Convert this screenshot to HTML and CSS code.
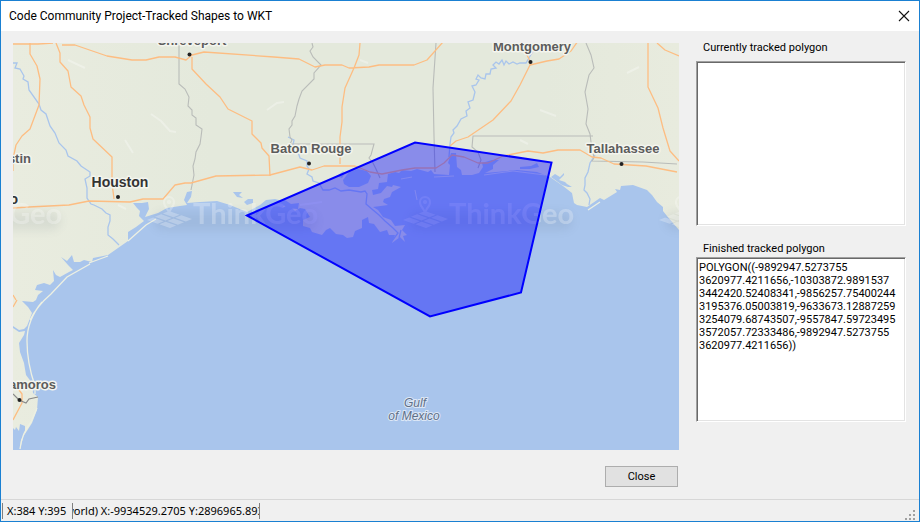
FILE: index.html
```html
<!DOCTYPE html>
<html lang="en">
<head>
<meta charset="utf-8">
<title>Code Community Project-Tracked Shapes to WKT</title>
<link rel="stylesheet" href="styles.css">
</head>
<body>
<div class="window">
  <header class="titlebar">
    <h1 class="title">Code Community Project-Tracked Shapes to WKT</h1>
    <button class="dismiss" type="button" aria-label="Close window">
      <svg width="12" height="12" viewBox="0 0 12 12"><path d="M1 1 11 11M11 1 1 11" fill="none" stroke="#111" stroke-width="1.1"/></svg>
    </button>
  </header>
  <main class="content">
    <section class="map-column">
      <svg class="map" viewBox="13 43 666 407" preserveAspectRatio="xMidYMid slice" role="img" aria-label="Map of the Gulf coast">
        <defs>
          <linearGradient id="ground" x1="0" x2="1" y1="0" y2="0">
            <stop offset="0" stop-color="#e9ecdf"/><stop offset=".3" stop-color="#e4e9dc"/><stop offset=".8" stop-color="#e4e9dc"/><stop offset="1" stop-color="#e8ebde"/>
          </linearGradient>
          <filter id="soft" x="-20%" y="-100%" width="140%" height="300%"><feGaussianBlur stdDeviation="5"/></filter>
          <g id="mark">
            <rect x="-16" y="4" width="164" height="18" rx="9" fill="#456" opacity=".1" filter="url(#soft)"/>
            <g fill="#fff" opacity=".26">
              <path transform="matrix(23 8 -22 9 0 3)" d="M0 0h.46v.28H0zM.54 0H1v.28H.54zM0 .36h.46v.28H0zM.54 .36H1v.28H.54zM0 .72h.46V1H0zM.54 .72H1V1H.54z"/>
              <path d="M0 6C-4-1-6-2-6-6a6 6 0 0 1 12 0C6-2 4-1 0 6zM0-10a4 4 0 0 0-4 4c0 3 2 4 4 8 2-4 4-5 4-8a4 4 0 0 0-4-4z" fill-rule="evenodd"/>
              <circle cy="-6" r="2"/>
              <text class="mark-text" x="24" y="16">ThinkGeo</text>
            </g>
          </g>
        </defs>
        <rect x="-400" y="-400" width="1600" height="1200" fill="#a9c5ec"/>
        <path fill="url(#ground)" d="M13 43V428L15 430 16 427 19 431 20 424 25 426 25 433 21 440 20 450 23 437 32 423 37 410 38 397 33 393 32 383 26 375 24 363 20 352 19 343 24 335 25 331 19 332 13 328 13 326 19 330 24 329 27 326 32 313 28 307 22 301 33 302 36 300 38 295 43 291 35 290 37 285 44 283 50 285 54 281 53 270 56 275 60 277 69 272 73 270 68 265 61 257 67 261 72 255 74 262 80 262 84 260 92 262 93 258 108 255 118 248 128 241 128 232 136 227 144 221 139 216 140 211 137 208 133 203 142 203 148 202 149 209 145 217 158 213 167 208 180 206 187 205 184 200 187 192 192 191 191 197 187 203 200 202 217 201 230 205 247 212 260 205 266 200 275 199 287 202 283 207 290 206 295 211 300 208 305 209 310 217 303 220 303 226 310 228 312 232 322 235 326 230 330 228 336 234 343 235 347 238 353 237 355 231 362 228 362 220 368 217 369 223 374 224 380 232 387 230 389 235 395 235 392 243 400 237 405 242 403 236 407 235 402 230 405 225 395 226 391 220 383 217 378 210 373 207 388 205 383 202 384 199 390 197 392 192 401 187 393 185 392 187 387 186 381 193 373 195 372 190 378 189 379 183 387 182 388 174 395 172 399 173 402 170 411 171 417 169 428 172 431 170 434 174 449 175 450 165 448 163 451 153 456 153 457 167 461 170 462 175 472 175 479 173 483 167 482 163 492 160 499 160 493 165 493 169 485 173 517 170 537 172 550 177 563 186 572 193 574 203 577 205 587 207 600 198 604 200 617 192 615 189 620 190 621 186 633 185 647 190 652 195 657 202 663 207 663 211 667 216 679 230V43z"/>
        <g fill="#a9c5ec">
          <path d="M343 180l6-8 9-3 9 2 4 5-3 7-9 4-10 0-5-3zM337 176l6-5 2 2-3 5zM233 192h9l-3 3 4 3-6-1zM244 202l4-3 5 0 0 4-6 2zM277 200l8 0 6 4 8-1-1 6-11-1zM520 167l11-1 6-3 2 4-9 2-10 0zM551 177l4-3 5 3 4-4 0 2-5 5 6 2 2 2 5 3-4 0-6-2z"/>
        </g>
        <g fill="none" stroke="#edf0e2" stroke-width="1.3">
          <path d="M30 320Q37 306 51 294L67 277 90 264M89 263l19-7M128 241l18-16 10-6M42 302Q27 320 27 341q0 22 8 45v8M20 449q2-16 11-27l6-14M588 210l12-8"/>
        </g>
        <g fill="none" stroke="#edf0e2" opacity=".7"><path d="M484 175l29-4 32 4M401 179l11-2M415 190l2 10M434 177l20-1"/></g>
        <g fill="none" stroke="#fff" opacity=".3" stroke-width="2"><path d="M151 114l10 7 9 10 6 1M125 140l8 13M118 205l8 4M68 60l17 8M267 110l10-7 7-1M540 110l16 6M627 73l12-6M300 205l22-3M520 140l8 4M360 60l8 3"/></g>
        <g class="river">
          <path d="M13 63h4l-2 5 5 1 4 7-1 3 5 3 1 8 10 14 2 6 5 4 4 12 5 7 4 10 7 7 2 6 9 5 4 5 9 6 0 4-5 3 2 9 0 10 4 6 3 1 8 4 4 4 4 2 0 6-2 6 0 8 5 4 6 6"/>
          <path d="M534 50l-4 6-4 7-6 0-3 1-4-2-4 2-3-3-2 4-2-5-3 4-3-2-3 3 3 3-5 1-1 5-4 0-1 5-4-1-3-3-2 4 3 1-3 5-4 1 3 6-2 8-5 2 2 6-4 3 1 5-6 3-4 7-4 4 1 3-3 4-1 7-1 13"/>
          <path d="M288 137l6 3-1 5 4 4 3 9 7 3 0 5 2 3-2 5 5 3 1 4 6 2 4 7 6 0 6-2 6 3 8-1 12 2 4-1 2 3-1 10 7 6 6 5 6 6 8 7 5 5-6 8M401 230l-2 8M595 155l-5 8-2 9-3 6 0 7-1 5 3 3 3 6-1 6"/>
        </g>
        <g class="border">
          <path d="M179 43v41l6 5 4 8-1 9 4 4 0 5 4 3 0 7 6 4-1 8-1 7-4 8-1 7-2 7 1 9-3 15M312 43l1 4-3 4 3 6 8 8-7 8 0 6-12 12-3 8-2 7-2 10-3 5 0 4-3 4 1 8 2 3-2 4h84l-3 11-2 3 4 5 3 6 4 9M436 43l-3 45 1 48 1 36M593 136H473l-1 11 6 5 3 8-3 8M586 43l5 12 3 13-5 7-4 17 3 17-2 15 4 10 1 8 3 16-2 3 51 1 34 2"/>
        </g>
        <g class="road">
          <path d="M13 44h25l15-1M30 43v11l7 12 3 13-1 26-9 24-8 7-6 9-3 14v12M56 43l4 10v9l8 9 3 16 10 9 3 9 6 12v11l3 11 19 18v26l2 16M62 45l13 0 32 11 25 4h14l13-3h16l11 3 6-5 12-3 70 5 25 2 16 8 10-2 17 0 7 3 20-1 10-2h35l13-5 16-18M192 57v12l14 15 14 13 8 12 24 12v13l9 9 1 5 7 8 1 20M360 43l-1 12-5 13M354 68l-9 20-3 19 0 15-2 15v27"/>
          <path d="M13 208l16-1 40-2 20-4 41 1 13-3h20l12-14 10-2h6l25-7 54-1 30-8 12 3 12-4h31l15 6 12 2 20-4 13-2h21l8-5 8-8 12 2 14 6 10 0 15-7 25-5 15 2 15-3h22l12 7 9 1 13 6 32 2 31 6M450 146l6-5 12-4 25-17 18-19 9-16 10-20 17-4 12-2 12-8 7-10M530 66v-5l-7-14M648 43v44l10 21 5 20 7 23 9 10M657 43l8 7 14 6M13 307l4-7M13 295l3 5M16 386l6 8v9l-9 17"/>
        </g>
        <path d="M13 394l6 6 7 3 3-4 9-2" fill="none" stroke="#888" stroke-width="1.2"/>
        <use href="#mark" x="-87" y="208"/><use href="#mark" x="169" y="208"/><use href="#mark" x="425" y="208"/><use href="#mark" x="681" y="208"/>
        <g fill="#222"><circle cx="189.500" cy="54.500" r="2"/><circle cx="118" cy="197" r="2"/><circle cx="309" cy="163.500" r="2"/><circle cx="530.500" cy="62" r="2"/><circle cx="621.500" cy="164" r="2"/><circle cx="19.500" cy="400" r="2"/></g>
        <g class="places">
          <text x="192" y="45">Shreveport</text>
          <text x="532" y="51">Montgomery</text>
          <text x="311" y="153">Baton Rouge</text>
          <text x="623" y="153">Tallahassee</text>
          <text class="major" x="120" y="187">Houston</text>
          <text class="ends" x="31" y="163">Austin</text>
          <text class="major ends" x="18" y="204">San Antonio</text>
          <text class="ends" x="56" y="389">Matamoros</text>
        </g>
        <g class="sea-name"><text x="415" y="407">Gulf</text><text x="414" y="420">of Mexico</text></g>
        <path d="M247 215.500 415 142.500 551.500 162.500 521 292.500 430 316.500z" fill="#00f" fill-opacity=".4" stroke="#00f" stroke-width="2"/>
      </svg>
      <button class="close" type="button">Close</button>
    </section>
    <section class="fields">
      <div class="field">
        <label for="current">Currently tracked polygon</label>
        <textarea id="current"></textarea>
      </div>
      <div class="field compact">
        <label for="finished">Finished tracked polygon</label>
        <textarea id="finished">POLYGON((-9892947.5273755 3620977.4211656,-10303872.9891537 3442420.52408341,-9856257.75400244 3195376.05003819,-9633673.12887259 3254079.68743507,-9557847.59723495 3572057.72333486,-9892947.5273755 3620977.4211656))</textarea>
      </div>
    </section>
  </main>
  <footer class="statusbar">
    <span class="pane screen">X:384 Y:395</span>
    <span class="pane world"><span>(world) X:-9934529.2705 Y:2896965.8935</span></span>
    <svg class="grip" width="12" height="12" viewBox="0 0 12 12"><path d="M9 1h2v2H9zM5 5h2v2H5zM9 5h2v2H9zM1 9h2v2H1zM5 9h2v2H5zM9 9h2v2H9z" fill="#a0a0a0"/></svg>
  </footer>
</div>
</body>
</html>
```
FILE: styles.css
```css
* { box-sizing: border-box; }

body {
  margin: 0;
  background: #f0f0f0;
  color: #000;
  font: 11px/13px Roboto, "Liberation Sans", sans-serif;
}

.window {
  display: flex;
  flex-direction: column;
  min-height: 100vh;
  border: 1px solid #1a80d2;
}

.titlebar {
  display: flex;
  align-items: center;
  justify-content: space-between;
  height: 30px;
  padding: 0 9px 0 8px;
  background: #fff;
}

.title {
  margin: 0;
  font: 12px/16px Roboto, "Liberation Sans", sans-serif;
}

.dismiss {
  display: flex;
  padding: 0;
  border: 0;
  background: none;
}

.content {
  display: grid;
  grid-template-columns: minmax(0, 1fr) 210px;
  gap: 17px;
  flex: 1;
  padding: 12px 13px 11px 12px;
}

.map-column {
  display: flex;
  flex-direction: column;
  align-items: flex-end;
  gap: 16px;
}

.map {
  display: block;
  width: 100%;
}

.close {
  width: 73px;
  height: 21px;
  margin-right: 1px;
  padding: 0;
  border: 1px solid #adadad;
  background: #e1e1e1;
  color: #000;
  font: inherit;
}

.fields {
  display: flex;
  flex-direction: column;
  gap: 18px;
}

.field {
  display: flex;
  flex-direction: column;
  gap: 8px;
}

.compact {
  gap: 3px;
}

.field label {
  padding-left: 7px;
  line-height: 10px;
}

.field textarea {
  display: block;
  width: 100%;
  height: 165px;
  margin: 0;
  padding: 3px 2px;
  border: 1px solid;
  border-color: #a0a0a0 #fff #fff #a0a0a0;
  outline: 0;
  background: #fff;
  box-shadow: inset 1px 1px #696969, inset -1px -1px #e3e3e3;
  color: #000;
  font: inherit;
  resize: none;
  overflow: hidden;
}

.statusbar {
  display: flex;
  align-items: center;
  height: 22px;
  padding: 1px 3px 0 1px;
  border-top: 1px solid #d7d7d7;
  font: 11px/16px "Noto Sans", "Open Sans", sans-serif;
}

.pane {
  border-left: 1px solid #808080;
  white-space: nowrap;
}

.screen {
  width: 70px;
  padding-left: 4px;
}

.world {
  display: flex;
  justify-content: center;
  width: 188px;
  border-right: 1px solid #808080;
  overflow: hidden;
}

.grip {
  align-self: flex-end;
  margin-left: auto;
}

.mark-text {
  font: bold 29px Lato, sans-serif;
}

.river { fill: none; stroke: #a9c5ec; stroke-width: 1.3; }
.border { fill: none; stroke: #b9bcb9; stroke-width: 1.1; }
.road { fill: none; stroke: #fdbd82; stroke-width: 1.3; stroke-linejoin: round; }

.places text {
  font: bold 13px "Liberation Sans", Arial, sans-serif;
  fill: #5c5c5c;
  stroke: #f4f5ee;
  stroke-width: 3px;
  stroke-linejoin: round;
  paint-order: stroke;
  text-anchor: middle;
}

.places .major { font-size: 14px; fill: #333; }
.places .ends { text-anchor: end; }

.sea-name text {
  font: italic 12px "Liberation Sans", Arial, sans-serif;
  fill: #5f6f88;
  stroke: #dce7f6;
  stroke-width: 2px;
  paint-order: stroke;
  text-anchor: middle;
}
```
